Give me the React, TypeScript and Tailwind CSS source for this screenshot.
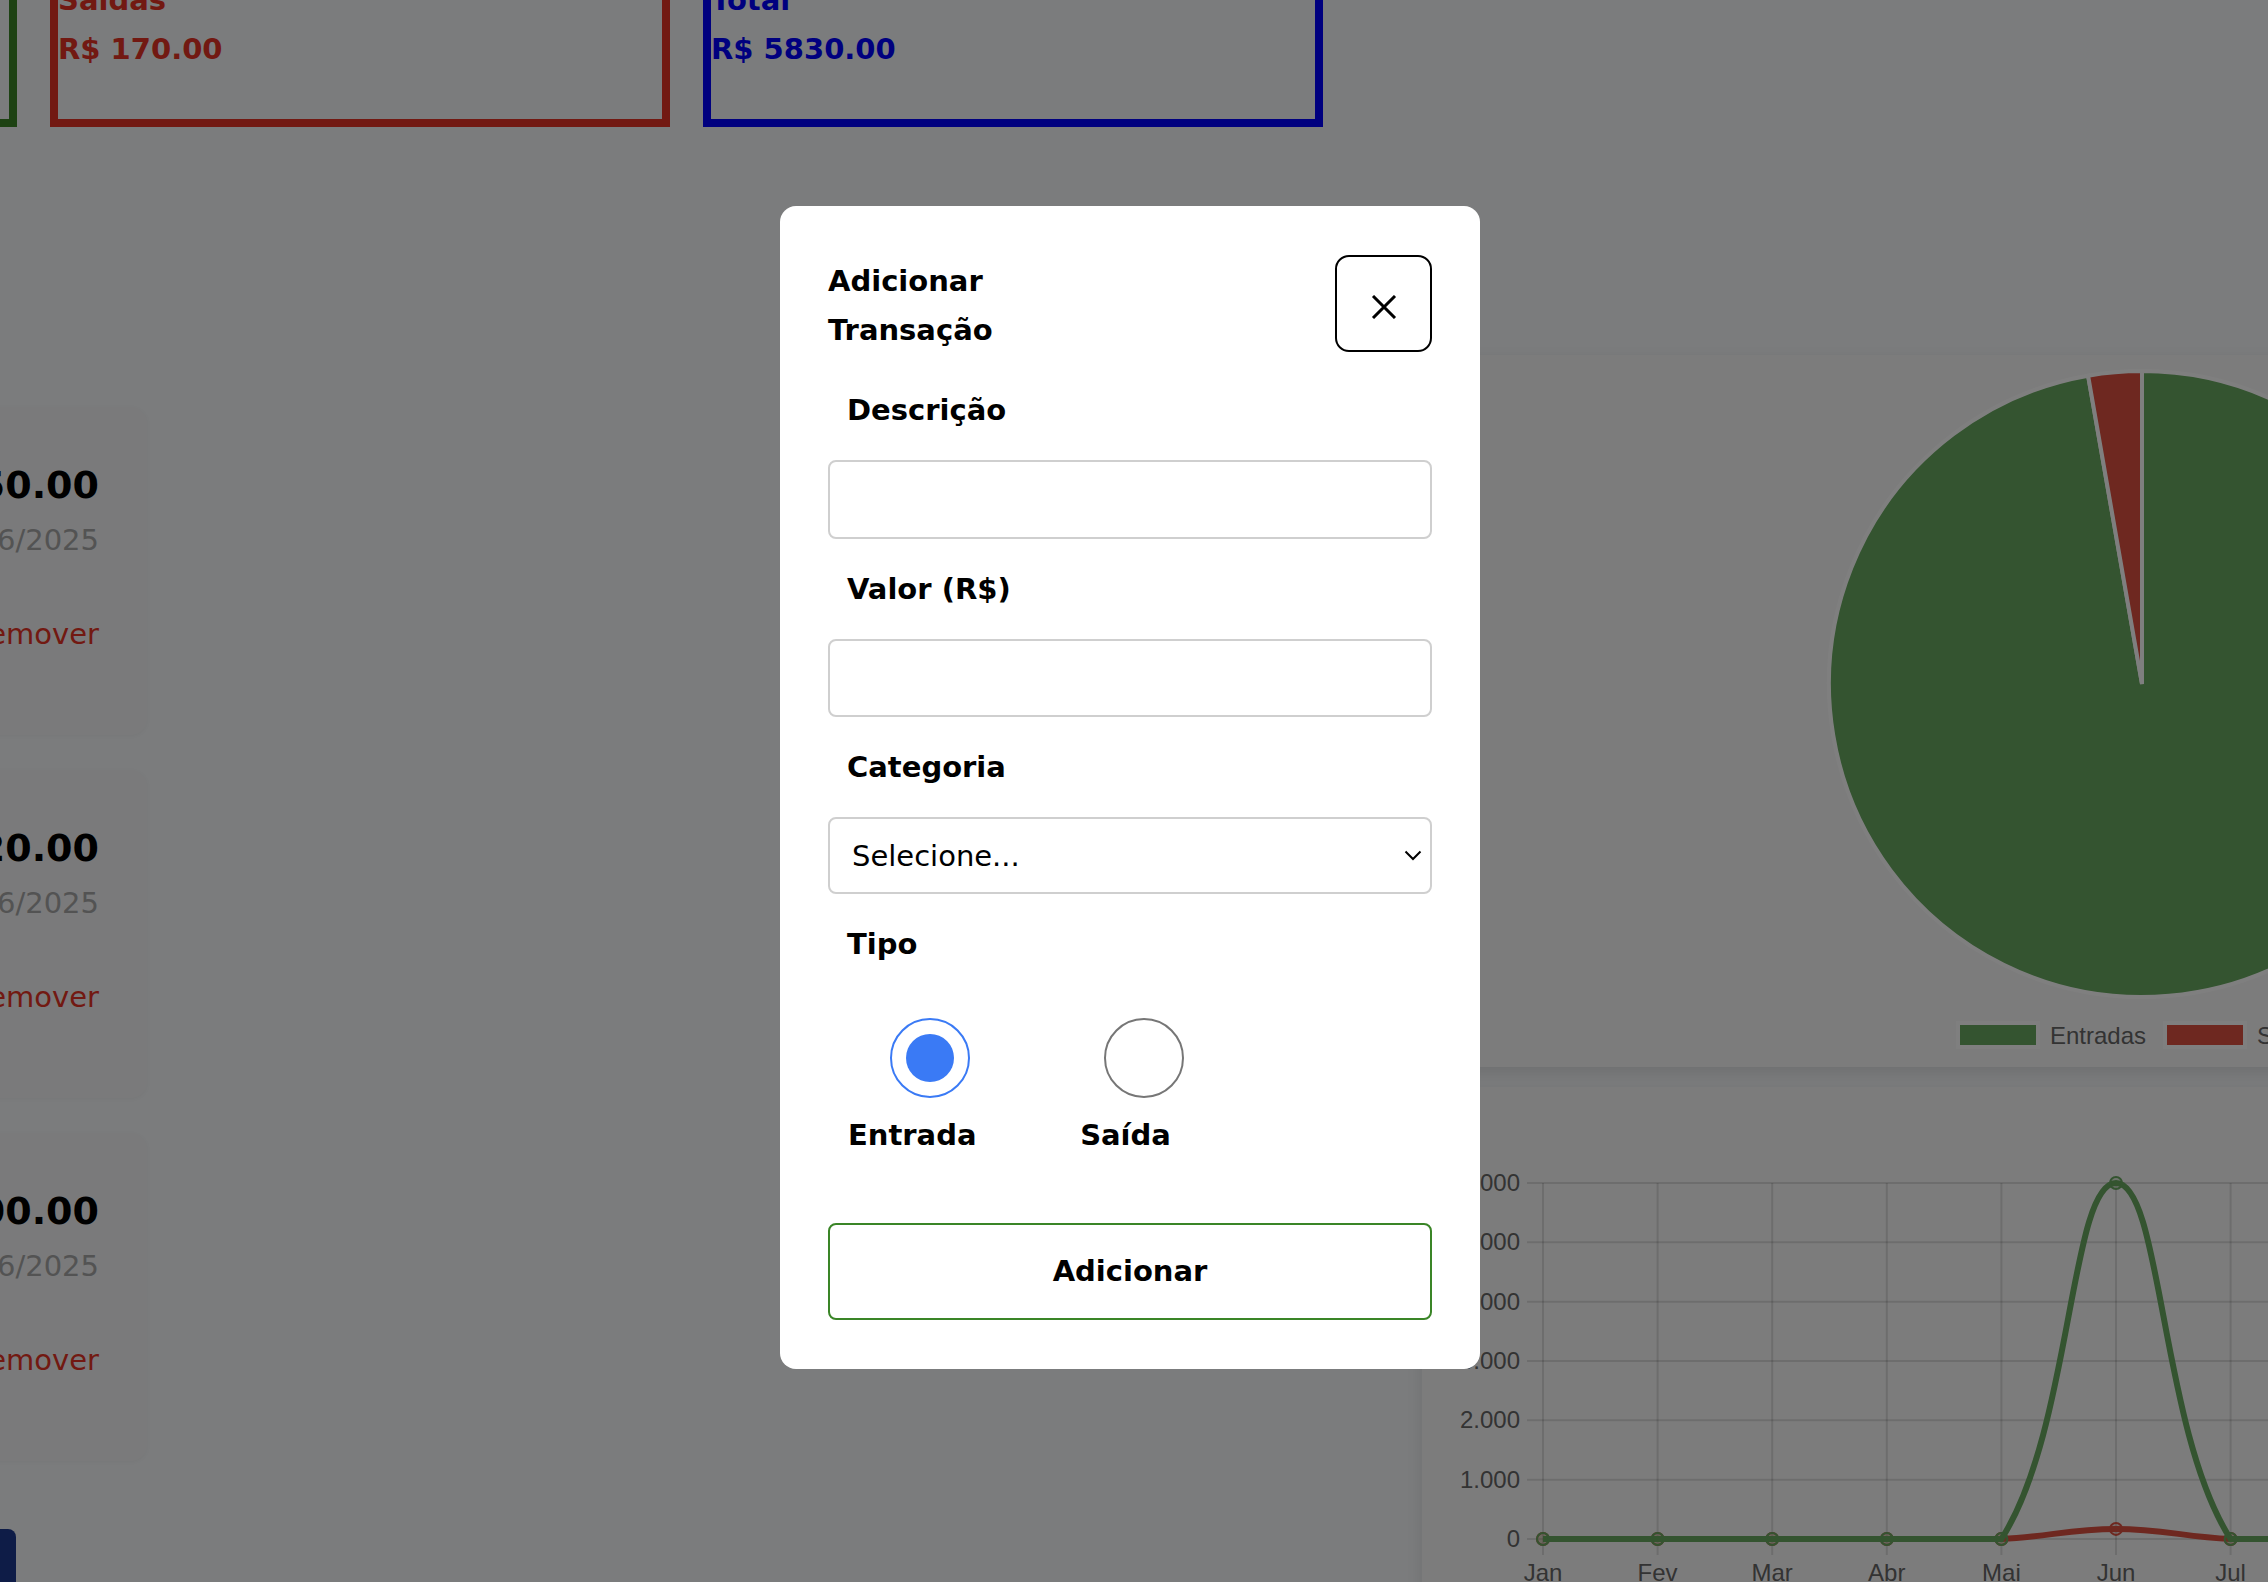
import React from 'react';

const MONTHS = ['Jan', 'Fev', 'Mar', 'Abr', 'Mai', 'Jun', 'Jul', 'Ago', 'Set', 'Out', 'Nov', 'Dez'];
const ENTRADAS = [0, 0, 0, 0, 0, 6000, 0, 0, 0, 0, 0, 0];
const SAIDAS = [0, 0, 0, 0, 0, 170, 0, 0, 0, 0, 0, 0];

const GREEN = '#68a860';
const RED = '#dc5040';
const AXIS = '#666666';

type Pt = { x: number; y: number };

// same curve chart.js draws with tension 0.4 (control points capped to the chart area)
function splinePath(pts: Pt[], top: number, bottom: number, t = 0.4) {
  const clamp = (v: number) => Math.min(bottom, Math.max(top, v));
  const cps = pts.map((cur, i) => {
    const prev = pts[i - 1] ?? cur;
    const next = pts[i + 1] ?? cur;
    const d01 = Math.hypot(cur.x - prev.x, cur.y - prev.y);
    const d12 = Math.hypot(next.x - cur.x, next.y - cur.y);
    let s01 = d01 / (d01 + d12);
    let s12 = d12 / (d01 + d12);
    if (!isFinite(s01)) s01 = 0;
    if (!isFinite(s12)) s12 = 0;
    const fa = t * s01;
    const fb = t * s12;
    return {
      c1: { x: cur.x - fa * (next.x - prev.x), y: clamp(cur.y - fa * (next.y - prev.y)) },
      c2: { x: cur.x + fb * (next.x - prev.x), y: clamp(cur.y + fb * (next.y - prev.y)) },
    };
  });
  let d = `M${pts[0].x},${pts[0].y}`;
  for (let i = 1; i < pts.length; i++) {
    d += ` C${cps[i - 1].c2.x},${cps[i - 1].c2.y} ${cps[i].c1.x},${cps[i].c1.y} ${pts[i].x},${pts[i].y}`;
  }
  return d;
}

const SUMMARY = [
  { title: 'Entradas', value: 'R$ 6000.00', border: 'border-[#3a8527]', text: 'text-[#3a8527]' },
  { title: 'Saídas', value: 'R$ 170.00', border: 'border-[#e43224]', text: 'text-[#e43224]' },
  { title: 'Total', value: 'R$ 5830.00', border: 'border-[#0000ff]', text: 'text-[#0000ff]' },
];

const TRANSACTIONS = [
  { desc: 'Mercado', amount: '- R$ 150.00', date: '12/06/2025' },
  { desc: 'Lanche', amount: '- R$ 20.00', date: '12/06/2025' },
  { desc: 'Salário', amount: '+ R$ 6000.00', date: '05/06/2025' },
];

function SummaryCard({ title, value, border, text }: (typeof SUMMARY)[number]) {
  return (
    <div className={`w-[620px] shrink-0 border-[8px] ${border} pt-[20px] pb-[53px] ${text} font-bold text-[29px]`}>
      <h3 className="leading-[34px] mb-[15px]">{title}</h3>
      <p className="leading-[34px]">{value}</p>
    </div>
  );
}

function TransactionCard({ desc, amount, date }: (typeof TRANSACTIONS)[number]) {
  return (
    <div className="h-[328px] rounded-[16px] bg-[#f4f5f6] shadow-[0_1px_4px_rgba(0,0,0,0.04)] flex justify-between pl-[48px] pr-[48px] pt-[55px]">
      <p className="text-[30px] font-bold leading-[46px]">{desc}</p>
      <div className="flex flex-col items-end">
        <p className="text-[38px] font-bold leading-[46px] text-black">{amount}</p>
        <p className="mt-[15px] text-[29px] leading-[34px] text-[#a6a6a6]">{date}</p>
        <button className="mt-[60px] text-[29px] leading-[34px] text-[#e43224]">Remover</button>
      </div>
    </div>
  );
}

function PieChart() {
  const cx = 720;
  const cy = 329;
  const r = 313;
  const total = 6000 + 170;
  const ang = (6000 / total) * Math.PI * 2;
  const x1 = cx + r * Math.sin(ang);
  const y1 = cy - r * Math.cos(ang);
  return (
    <svg width="1440" height="712" className="block font-['Liberation_Sans',Arial,sans-serif]">
      <path d={`M${cx},${cy} L${cx},${cy - r} A${r},${r} 0 1 1 ${x1},${y1} Z`} fill={GREEN} stroke="#ffffff" strokeWidth="4" />
      <path d={`M${cx},${cy} L${x1},${y1} A${r},${r} 0 0 1 ${cx},${cy - r} Z`} fill={RED} stroke="#ffffff" strokeWidth="4" />
      <rect x="536" y="668" width="80" height="24" fill={GREEN} stroke="#ffffff" strokeWidth="4" />
      <text x="628" y="689" fontSize="24" fill={AXIS}>Entradas</text>
      <rect x="743" y="668" width="80" height="24" fill={RED} stroke="#ffffff" strokeWidth="4" />
      <text x="835" y="689" fontSize="24" fill={AXIS}>Saídas</text>
    </svg>
  );
}

function LineChart() {
  const x0 = 121;
  const dx = 114.6;
  const top = 96;
  const bottom = 452;
  const per = (bottom - top) / 6000;
  const right = x0 + dx * 11;
  const toPts = (vals: number[]) => vals.map((v, i) => ({ x: x0 + i * dx, y: bottom - v * per }));
  const green = toPts(ENTRADAS);
  const red = toPts(SAIDAS);
  const ticks = [6000, 5000, 4000, 3000, 2000, 1000, 0];
  return (
    <svg width="1440" height="600" className="block font-['Liberation_Sans',Arial,sans-serif]">
      {ticks.map((v) => {
        const y = bottom - v * per;
        return (
          <g key={v}>
            <line x1={105} x2={right} y1={y} y2={y} stroke="rgba(0,0,0,0.12)" strokeWidth="2" />
            <text x={98} y={y + 8} fontSize="24" fill={AXIS} textAnchor="end">
              {v.toLocaleString('pt-BR')}
            </text>
          </g>
        );
      })}
      {MONTHS.map((m, i) => (
        <g key={m}>
          <line x1={x0 + i * dx} x2={x0 + i * dx} y1={top} y2={bottom + 16} stroke="rgba(0,0,0,0.12)" strokeWidth="2" />
          <text x={x0 + i * dx} y={494} fontSize="24" fill={AXIS} textAnchor="middle">{m}</text>
        </g>
      ))}
      <path d={splinePath(red, top, bottom)} fill="none" stroke={RED} strokeWidth="6" />
      {red.map((p, i) => (
        <circle key={i} cx={p.x} cy={p.y} r="6" fill="rgba(220,80,64,0.2)" stroke={RED} strokeWidth="2" />
      ))}
      <path d={splinePath(green, top, bottom)} fill="none" stroke={GREEN} strokeWidth="6" />
      {green.map((p, i) => (
        <circle key={i} cx={p.x} cy={p.y} r="6" fill="rgba(104,168,96,0.2)" stroke={GREEN} strokeWidth="2" />
      ))}
    </svg>
  );
}

function Field({ label, children }: { label: string; children: React.ReactNode }) {
  return (
    <>
      <label className="pl-[19px] text-[29px] font-bold leading-[36px]">{label}</label>
      {children}
    </>
  );
}

function Radio({ label, checked }: { label: string; checked?: boolean }) {
  return (
    <div className="flex flex-col items-center gap-[19px]">
      <div className="pl-[36px]">
        <div
          className={`flex h-[80px] w-[80px] items-center justify-center rounded-full border-2 bg-white ${
            checked ? 'border-[#3a7af5]' : 'border-[#767676]'
          }`}
        >
          {checked && <div className="h-[48px] w-[48px] rounded-full bg-[#3a7af5]" />}
        </div>
      </div>
      <span className="text-[29px] font-bold leading-[36px]">{label}</span>
    </div>
  );
}

function Modal() {
  return (
    <div className="fixed inset-0 flex items-center justify-center bg-black/50 pr-[8px] pb-[7px]">
      <div className="w-[700px] rounded-[16px] bg-white px-[48px] pt-[48px] pb-[49px] text-black">
        <div className="flex items-start justify-between">
          <h2 className="w-[220px] pt-[3px] text-[29px] font-bold leading-[49px]">Adicionar Transação</h2>
          <button className="mt-[1px] flex h-[97px] w-[97px] items-center justify-center rounded-[14px] border-2 border-black">
            <svg width="26" height="24" viewBox="0 0 26 24" className="mt-[7px]">
              <path d="M2 1 L24 23 M24 1 L2 23" stroke="#000" strokeWidth="3" fill="none" />
            </svg>
          </button>
        </div>
        <div className="mt-[37px] flex flex-col gap-[32px]">
          <Field label="Descrição">
            <div className="h-[79px] rounded-[8px] border-2 border-[#cfcfcf]" />
          </Field>
          <Field label="Valor (R$)">
            <div className="h-[78px] rounded-[8px] border-2 border-[#cfcfcf]" />
          </Field>
          <Field label="Categoria">
            <div className="flex h-[77px] items-center justify-between rounded-[8px] border-2 border-[#cfcfcf] pl-[22px] pr-[8px]">
              <span className="text-[29px] leading-[34px]">Selecione...</span>
              <svg width="18" height="11" viewBox="0 0 18 11">
                <path d="M1.5 1.5 L9 9 L16.5 1.5" stroke="#000" strokeWidth="2" fill="none" />
              </svg>
            </div>
          </Field>
          <label className="pl-[19px] text-[29px] font-bold leading-[36px]">Tipo</label>
          <div className="mt-[24px] flex gap-[91px] pl-[20px]">
            <Radio label="Entrada" checked />
            <Radio label="Saída" />
          </div>
          <button className="mt-[38px] h-[97px] rounded-[8px] border-2 border-[#3a8527] bg-white text-[29px] font-bold">
            Adicionar
          </button>
        </div>
      </div>
    </div>
  );
}

export default function App() {
  return (
    <div className="relative h-[1582px] w-full overflow-hidden bg-[#f6f8fa] font-['DejaVu_Sans',sans-serif]">
      <div className="-ml-[603px] -mt-[45px] w-[3500px]">
        <div className="flex gap-[33px]">
          {SUMMARY.map((s) => (
            <SummaryCard key={s.title} {...s} />
          ))}
        </div>

        <div className="mt-[228px] flex">
          <div className="flex w-[750px] flex-col gap-[35px] pt-[52px]">
            {TRANSACTIONS.map((t) => (
              <TransactionCard key={t.desc} {...t} />
            ))}
            <button className="mt-[33px] h-[100px] w-[619px] rounded-[8px] bg-blue-900 text-[28px] font-bold text-white">
              + Nova Transação
            </button>
          </div>

          <div className="ml-[1275px] flex w-[1440px] flex-col gap-[20px]">
            <div className="h-[712px] rounded-[16px] bg-[#f9f9f9] shadow-[0_6px_16px_rgba(0,0,0,0.1)]">
              <PieChart />
            </div>
            <div className="h-[600px] rounded-[16px] bg-[#f9f9f9] shadow-[0_6px_16px_rgba(0,0,0,0.1)]">
              <LineChart />
            </div>
          </div>
        </div>
      </div>

      <Modal />
    </div>
  );
}
